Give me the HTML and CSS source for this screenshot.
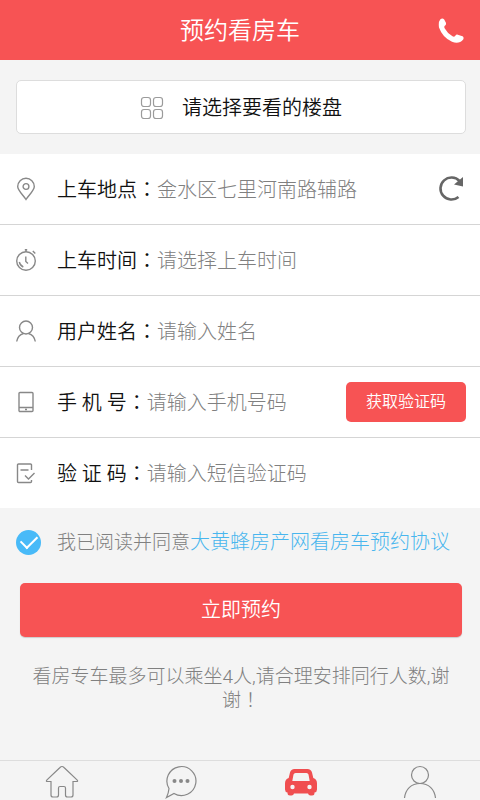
FILE: index.html
```html
<!DOCTYPE html>
<html lang="zh-CN">
<head>
<meta charset="utf-8">
<meta name="viewport" content="width=device-width, initial-scale=1">
<title>预约看房车</title>
<link rel="stylesheet" href="styles.css">
</head>
<body>
<header class="header">
  <h1 class="title">预约看房车</h1>
  <a class="call" href="#" aria-label="电话">
    <svg width="26" height="26" viewBox="0 0 26 26" fill="#fff"><path d="M2.200 1.600Q4.400-.4 6.200 1.500L7.800 4.500Q8.600 6.600 6.800 7.800Q5.800 8.900 6.800 10.500Q9.500 15.500 14.500 18.300Q16.200 19.200 17.300 17.800Q18.500 15.800 20.500 17L24.600 18.200Q26.200 19.400 25.200 21.500Q21 26.500 14 23.800Q4.500 19.500 1 9.500Q.2 4 2.200 1.600Z"/></svg>
  </a>
</header>
<main>
  <div class="picker">
    <button class="choose" type="button">
      <svg width="24" height="24" viewBox="0 0 24 24" fill="none" stroke="#9b9b9b" stroke-width="1.200"><rect x="1.500" y="1.500" width="9" height="9" rx="2.500"/><rect x="13.500" y="1.500" width="9" height="9" rx="2.500"/><rect x="1.500" y="13.500" width="9" height="9" rx="2.500"/><rect x="13.500" y="13.500" width="9" height="9" rx="2.500"/></svg>
      <span>请选择要看的楼盘</span>
    </button>
  </div>
  <form id="booking" class="form">
    <div class="row">
      <svg class="icon" viewBox="0 0 20 24"><path d="M10 22.500C7.500 18.500 1.700 13.500 1.700 9.500a8.300 8.300 0 0 1 16.600 0C18.300 13.500 12.500 18.500 10 22.500Z"/><circle cx="10" cy="9.500" r="2.900"/></svg>
      <label for="place">上车地点<span class="wide" lang="zh-TW">：</span></label>
      <input id="place" type="text" value="金水区七里河南路辅路">
      <button class="refresh" type="button" aria-label="刷新">
        <svg width="28" height="28" viewBox="0 0 28 28"><path d="M21.500 6A11 11 0 1 0 20.500 22" fill="none" stroke="#666" stroke-width="2.600"/><path d="M25 2V11.500L16 9.500Z" fill="#666"/></svg>
      </button>
    </div>
    <div class="row">
      <svg class="icon" viewBox="0 0 20 24"><circle cx="10" cy="13" r="9.300"/><path d="M10 3.700V1.500M8.800 1.800h2.400M16.800 3l2.500 2.500M9.800 8.500v5l2.200 2M3.300 14a7 7 0 0 0 4 5"/></svg>
      <label for="time">上车时间<span class="wide" lang="zh-TW">：</span></label>
      <input id="time" type="text" placeholder="请选择上车时间">
    </div>
    <div class="row">
      <svg class="icon" viewBox="0 0 20 24"><circle cx="10" cy="8.500" r="6.500"/><path d="M.7 22.500C1.500 18 4 15.500 7.500 14.500M19.300 22.500C18.500 18 16 15.500 12.500 14.500"/></svg>
      <label for="name">用户姓名<span class="wide" lang="zh-TW">：</span></label>
      <input id="name" type="text" placeholder="请输入姓名">
    </div>
    <div class="row">
      <svg class="icon" viewBox="0 0 20 24"><rect x="3" y="2.500" width="14" height="19" rx="1"/><path d="M3 17.500h14M9 19.500h2"/></svg>
      <label for="phone">手 机 号<span class="wide" lang="zh-TW">：</span></label>
      <input id="phone" type="tel" placeholder="请输入手机号码">
      <button class="code" type="button">获取验证码</button>
    </div>
    <div class="row">
      <svg class="icon" viewBox="0 0 20 24"><path d="M15.500 9V4a1 1 0 0 0-1-1H2.500a1 1 0 0 0-1 1v16.500a1 1 0 0 0 1 1h12a1 1 0 0 0 1-1V19M4.500 9h8M9 14.500l3.500 3.500 6-6"/></svg>
      <label for="sms">验 证 码<span class="wide" lang="zh-TW">：</span></label>
      <input id="sms" type="text" placeholder="请输入短信验证码">
    </div>
  </form>
  <div class="agree">
    <input id="agree" class="check" type="checkbox" checked form="booking">
    <p class="terms"><label for="agree">我已阅读并同意</label><a href="#">大黄蜂房产网看房车预约协议</a></p>
  </div>
  <button class="submit" type="submit" form="booking">立即预约</button>
  <p class="note">看房专车最多可以乘坐4人,请合理安排同行人数,谢谢<span class="wide" lang="zh-TW">！</span></p>
</main>
<nav class="tabs">
  <a href="#" aria-label="首页"><svg width="34" height="34" viewBox="0 0 34 34"><path d="M17 1.500q-1 0-2 1L2 14.800q-1.500 1.700 .5 1.700H6V30q0 2 2 2h3.500q2 0 2-2v-7q0-1.500 1.500-1.500h4q1.500 0 1.500 1.500v7q0 2 2 2H26q2 0 2-2V16.500h3.500q2 0 .5-1.700L19 2.500q-1-1-2-1Z"/></svg></a>
  <a href="#" aria-label="消息"><svg width="34" height="34" viewBox="0 0 34 34"><path d="M5 23.500A14.500 14.500 0 1 1 10 28.500L2.500 32.500Q4.500 28.500 5 23.500Z"/><g fill="#888" stroke="none"><circle cx="10.500" cy="16" r="2"/><circle cx="17" cy="16" r="2"/><circle cx="23.500" cy="16" r="2"/></g></svg></a>
  <a href="#" aria-label="看房车" aria-current="page"><svg width="34" height="34" viewBox="0 0 34 34"><path fill="#f04e50" stroke="none" fill-rule="evenodd" d="M10.500 4Q7 4 6 7.500L4.700 13Q1 14 1 18.500V24.500Q1 27 3.500 27.500V28Q3.500 30.500 6 30.500H7.500Q9.500 30.500 10 28.500H24Q24.500 30.500 26.500 30.500H28Q30.500 30.500 30.500 28V27.500Q33 27 33 24.500V18.500Q33 14 29.300 13L28 7.500Q27 4 23.500 4ZM11.500 8H22.500Q24 8 24.500 9.500L25.700 16H8.300L9.500 9.500Q10 8 11.500 8ZM8.500 19.800a2.200 2.200 0 1 1 0 4.400a2.200 2.200 0 0 1 0-4.400ZM25.500 19.800a2.200 2.200 0 1 1 0 4.400a2.200 2.200 0 0 1 0-4.400Z"/></svg></a>
  <a href="#" aria-label="我的"><svg width="34" height="34" viewBox="0 0 34 34"><circle cx="17" cy="10" r="8.500"/><path d="M1.500 33C2.500 24 8.500 18.500 17 18.500S31.500 24 32.500 33"/></svg></a>
</nav>
</body>
</html>
```
FILE: styles.css
```css
* { box-sizing: border-box; }

body {
  margin: 0;
  min-height: 100vh;
  display: flex;
  flex-direction: column;
  background: #f4f4f4;
  color: #111;
  font: 350 20px/24px Roboto, "Noto Sans CJK SC", sans-serif;
}

button, input { font: inherit; }

button {
  border: 0;
  padding: 0;
  cursor: pointer;
}

svg { display: block; flex: none; }

.wide { font-family: "Noto Sans CJK TC", sans-serif; }

.header {
  display: grid;
  grid-template-columns: 1fr auto 1fr;
  align-items: center;
  height: 60px;
  padding: 2px 16px 0;
  background: #f75354;
  color: #fff;
}

.title {
  grid-column: 2;
  margin: 0;
  font-size: 24px;
  font-weight: 350;
}

.call { justify-self: end; }

.picker { padding: 20px 14px 20px 16px; }

.choose {
  display: flex;
  align-items: center;
  justify-content: center;
  gap: 18px;
  width: 100%;
  height: 54px;
  padding: 1px 0 0;
  border: 1px solid #ddd;
  border-radius: 5px;
  background: #fff;
  color: #111;
}

.form { background: #fff; }

.row {
  display: flex;
  align-items: center;
  height: 71px;
  padding: 0 14px 0 16px;
  border-bottom: 1px solid #d5d5d5;
}

.row:last-child {
  height: 70px;
  border-bottom: 0;
}

.icon {
  width: 20px;
  height: 24px;
  margin-right: 21px;
  fill: none;
  stroke: #888;
  stroke-width: 1.4;
}

.row input {
  flex: 1;
  min-width: 0;
  padding: 1px 0 0;
  border: 0;
  outline: 0;
  background: none;
  color: #808080;
  font-weight: 300;
}

.row input::placeholder { color: #808080; opacity: 1; }

.refresh { background: none; }

.code {
  height: 40px;
  padding: 0 20px;
  border-radius: 5px;
  background: #f75354;
  color: #fff;
  font-size: 16px;
}

.agree {
  display: flex;
  align-items: center;
  gap: 16px;
  padding: 21px 16px 0;
}

.check {
  appearance: none;
  flex: none;
  width: 25px;
  height: 25px;
  margin: 0;
  border-radius: 50%;
  background: #48baf8;
  display: grid;
  place-items: center;
}

.check:checked::before {
  content: "";
  width: 14px;
  height: 8px;
  border: solid #fff;
  border-width: 0 0 2px 2px;
  transform: translateY(-2px) rotate(-45deg);
}

.terms {
  margin: 0;
  padding-top: 1px;
  color: #808080;
  font-weight: 300;
}

.terms label { font-size: 19px; }

.terms a {
  color: #48b6ee;
  text-decoration: none;
}

.submit {
  display: block;
  width: calc(100% - 38px);
  height: 54px;
  margin: 28px 18px 0 20px;
  border-radius: 5px;
  background: #f75354;
  box-shadow: 0 1px 1px #ccc;
  color: #fff;
}

.note {
  margin: 29px 28px 16px 30px;
  color: #808080;
  font-size: 19px;
  font-weight: 300;
  line-height: 22px;
  text-align: center;
}

.tabs {
  display: grid;
  grid-template-columns: repeat(4, 1fr);
  justify-items: center;
  height: 40px;
  margin-top: auto;
  padding: 4px 0 0 2px;
  border-top: 1px solid #ddd;
  overflow: hidden;
}

.tabs svg {
  fill: none;
  stroke: #888;
  stroke-width: 1.2;
}
```
